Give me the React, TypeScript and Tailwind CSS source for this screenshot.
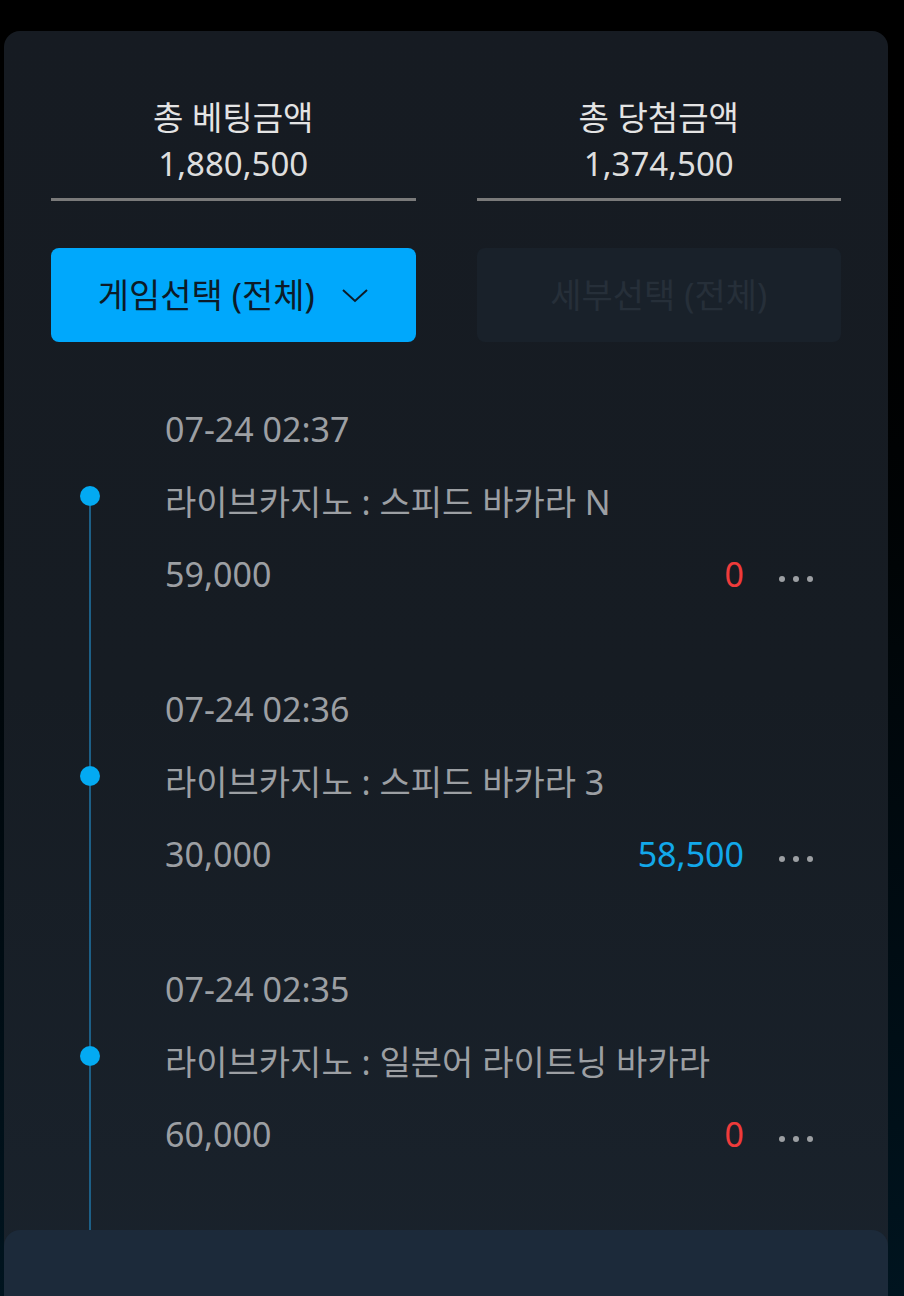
import type { ReactNode } from 'react';

interface Bet {
  time: string;
  game: string;
  amount: string;
  win: string;
  won: boolean;
}

const bets: Bet[] = [
  { time: '07-24 02:37', game: '라이브카지노 : 스피드 바카라 N', amount: '59,000', win: '0', won: false },
  { time: '07-24 02:36', game: '라이브카지노 : 스피드 바카라 3', amount: '30,000', win: '58,500', won: true },
  { time: '07-24 02:35', game: '라이브카지노 : 일본어 라이트닝 바카라', amount: '60,000', win: '0', won: false },
];

function Stat({ label, value }: { label: string; value: string }) {
  return (
    <div className="flex flex-col items-center border-b-[3px] border-[#7a7a7a] pb-[11px]">
      <span className="text-[33px] leading-[44px] text-[#e4e4e4]">{label}</span>
      <span className="text-[33px] leading-[47px] text-[#dedede]">{value}</span>
    </div>
  );
}

function Chevron() {
  return (
    <svg width="28" height="16" viewBox="0 0 28 16" fill="none">
      <path d="M2 3l12 11L26 3" stroke="currentColor" strokeWidth="2" />
    </svg>
  );
}

function Row({ children, className = '' }: { children: ReactNode; className?: string }) {
  return <div className={`h-[72px] flex items-center ${className}`}>{children}</div>;
}

function BetItem({ bet, first, last }: { bet: Bet; first: boolean; last: boolean }) {
  return (
    <div className="flex">
      <div className="w-[114px] flex flex-col items-center pr-[36px]">
        <div className={`h-[93px] w-[2px] ${first ? '' : 'bg-[#1d5f86]'}`} />
        <div className="w-[20px] h-[20px] rounded-full bg-[#03aaf2] flex-shrink-0" />
        <div className="flex-1 w-[2px] bg-[#1d5f86]" />
      </div>
      <div className={`flex-1 flex flex-col text-[#9c9fa3] text-[34px] ${last ? 'pb-[61px]' : 'pb-[64px]'}`}>
        <Row>{bet.time}</Row>
        <Row className="pt-[2px]">{bet.game}</Row>
        <Row className="justify-between pt-[2px]">
          <span>{bet.amount}</span>
          <div className="flex items-center gap-[35px] pr-[28px]">
            <span className={bet.won ? 'text-[#12a8ea]' : 'text-[#ef3b3b]'}>{bet.win}</span>
            <div className="flex gap-[8px] pt-[10px]">
              <span className="w-[6px] h-[6px] rounded-full bg-[#9c9fa3]" />
              <span className="w-[6px] h-[6px] rounded-full bg-[#9c9fa3]" />
              <span className="w-[6px] h-[6px] rounded-full bg-[#9c9fa3]" />
            </div>
          </div>
        </Row>
      </div>
    </div>
  );
}

export default function App() {
  return (
    <div
      className="h-[1296px] overflow-hidden bg-gradient-to-b from-black via-[#000609] to-[#00141f] pt-[31px] pl-[4px] pr-[16px]"
      style={{ fontFamily: '"Noto Sans", "Noto Sans CJK KR", sans-serif' }}
    >
      <div className="rounded-t-[16px] bg-gradient-to-b from-[#161b22] via-[#161c23] to-[#1a232d] flex flex-col">
        <div className="px-[47px] pt-[65px]">
          <div className="grid grid-cols-2 gap-[61px]">
            <Stat label="총 베팅금액" value="1,880,500" />
            <Stat label="총 당첨금액" value="1,374,500" />
          </div>
          <div className="grid grid-cols-2 gap-[61px] mt-[47px]">
            <button className="h-[94px] rounded-[8px] bg-[#00a8fc] text-[#0c1b28] text-[34px] flex items-center justify-center gap-[26px]">
              <span>게임선택 (전체)</span>
              <Chevron />
            </button>
            <button className="h-[94px] rounded-[8px] bg-[#19212a] text-[#262f39] text-[34px] flex items-center justify-center">
              <span>세부선택 (전체)</span>
            </button>
          </div>
          <div className="mt-[51px]">
            {bets.map((b, i) => (
              <BetItem key={b.time} bet={b} first={i === 0} last={i === bets.length - 1} />
            ))}
          </div>
        </div>
        <div className="h-[120px] rounded-t-[16px] bg-[#1c2a3a]" />
      </div>
    </div>
  );
}
